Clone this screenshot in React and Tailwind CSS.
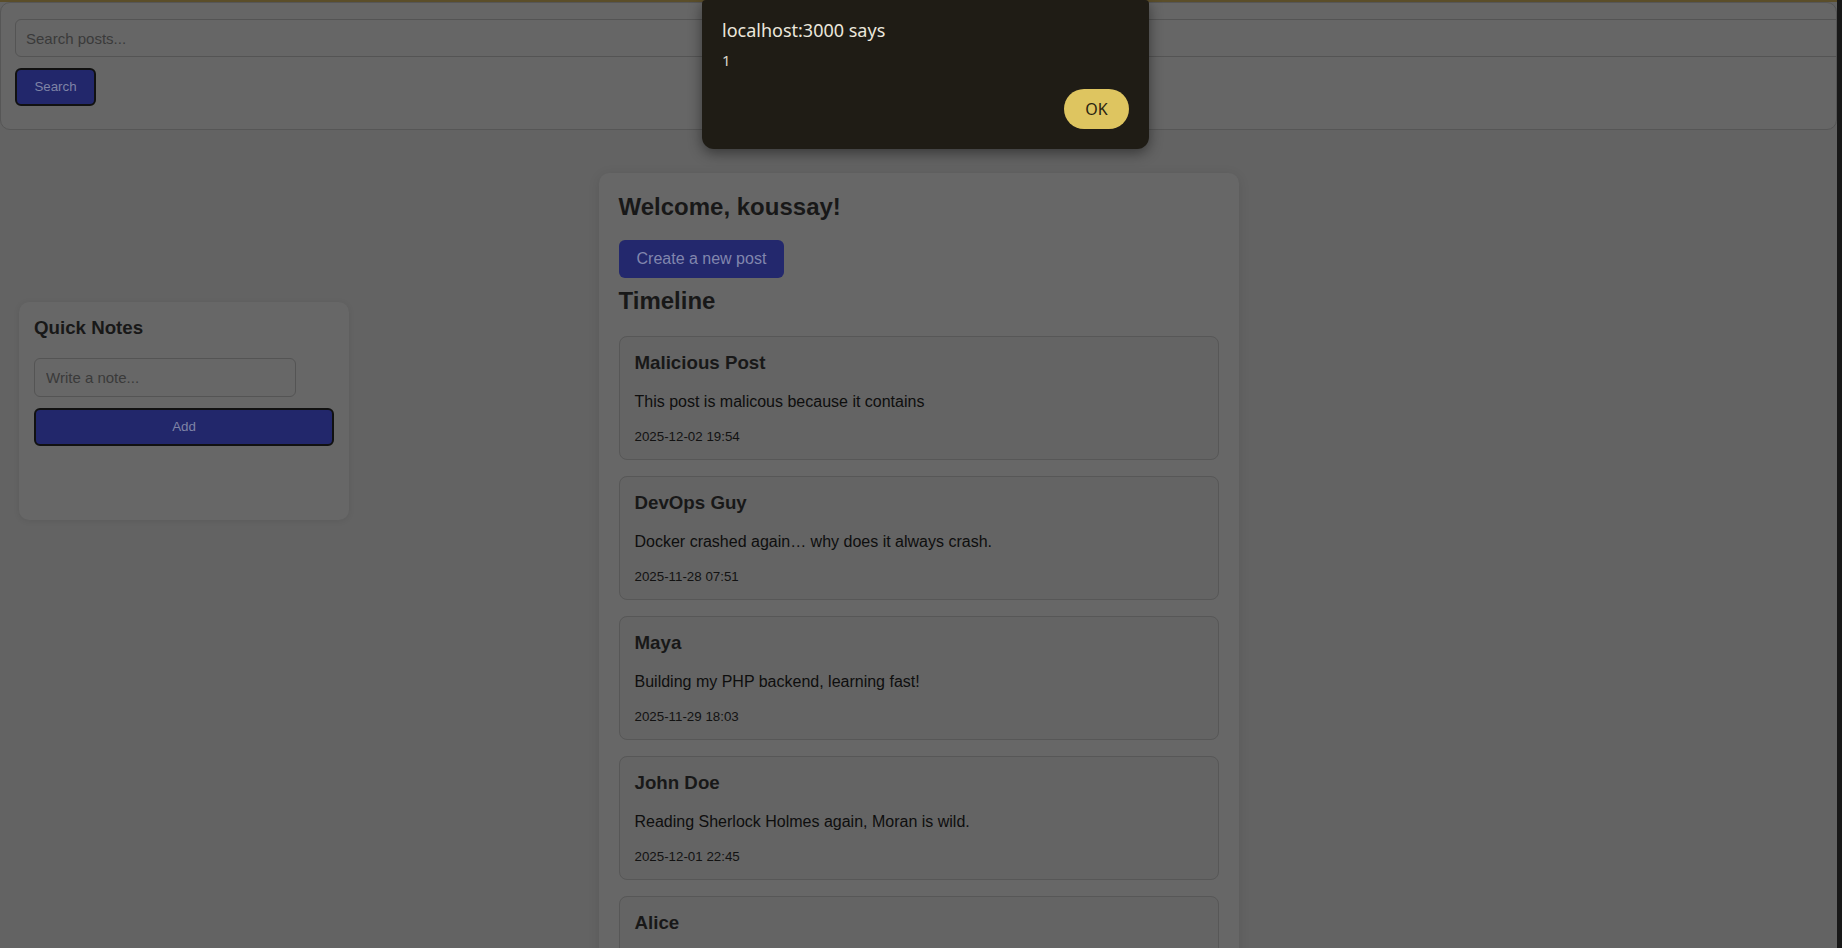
import React from "react";

const posts = [
  { author: "Malicious Post", body: "This post is malicous because it contains", date: "2025-12-02 19:54" },
  { author: "DevOps Guy", body: "Docker crashed again… why does it always crash.", date: "2025-11-28 07:51" },
  { author: "Maya", body: "Building my PHP backend, learning fast!", date: "2025-11-29 18:03" },
  { author: "John Doe", body: "Reading Sherlock Holmes again, Moran is wild.", date: "2025-12-01 22:45" },
  { author: "Alice", body: "Coffee first, code later.", date: "2025-11-30 09:12" },
];

function PostCard({ post }) {
  return (
    <div className="h-[124px] shrink-0 rounded-[8px] border border-[#575757] bg-[#646464] px-[15px] pt-[15px] pb-[15px]">
      <h3 className="m-0 text-[18.72px] leading-[22px] font-bold text-[#181818]">{post.author}</h3>
      <p className="mt-[19px] text-[16px] leading-[18px] text-[#0e0e0e]">{post.body}</p>
      <p className="mt-[18px] text-[13.33px] leading-[15px] text-[#121212]">{post.date}</p>
    </div>
  );
}

function QuickNotes() {
  return (
    <div className="ml-[19px] mt-[129px] w-[330px] h-[218px] rounded-[10px] bg-[#676767] shadow-[0_1px_6px_rgba(0,0,0,0.08)] px-[15px] pt-[15px]">
      <h3 className="m-0 text-[18.72px] leading-[22px] font-bold text-[#181818]">Quick Notes</h3>
      <input
        placeholder="Write a note..."
        className="mt-[19px] block w-[262px] h-[39px] rounded-[6px] border border-[#545454] bg-transparent px-[11px] text-[15px] text-[#222] placeholder:text-[#3a3a3a] outline-none"
      />
      <button className="mt-[11px] block w-[300px] h-[38px] rounded-[6px] border-2 border-[#111] bg-[#22276b] text-[13.33px] text-[#7f83a6]">
        Add
      </button>
    </div>
  );
}

function AlertDialog() {
  return (
    <div className="absolute top-0 left-[702px] w-[447px] h-[149px] rounded-b-[12px] rounded-t-[4px] bg-[#1f1c15] shadow-[0_4px_14px_rgba(0,0,0,0.45)] px-[20px] pt-[18px] font-['Noto_Sans',sans-serif]">
      <div className="text-[18px] leading-[24px] text-[#ebe7dc]">localhost:3000 says</div>
      <div className="mt-[8px] text-[15px] leading-[20px] text-[#d9d5ca]">1</div>
      <div className="mt-[19px] flex justify-end">
        <button className="w-[65px] h-[40px] rounded-full bg-[#dec560] text-[16px] text-[#2a2410]">OK</button>
      </div>
    </div>
  );
}

export default function App() {
  return (
    <div className="relative flex h-screen overflow-hidden bg-[#636363] font-['Liberation_Sans',Arial,sans-serif]">
      <div className="flex min-w-0 flex-1 flex-col overflow-hidden">
        <div className="h-[2px] shrink-0 bg-[#5b4e2a]" />
        <div className="h-[128px] shrink-0 rounded-[10px] border border-[#565656] bg-[#666666] pl-[14px] pt-[16px]">
          <input
            placeholder="Search posts..."
            className="block w-[calc(100%+40px)] h-[38px] rounded-[6px] border border-[#545454] bg-transparent px-[10px] text-[15px] text-[#222] placeholder:text-[#3a3a3a] outline-none"
          />
          <button className="mt-[11px] block h-[38px] w-[81px] rounded-[6px] border-2 border-[#111] bg-[#22276b] text-[13.33px] text-[#7f83a6]">
            Search
          </button>
        </div>

        <div className="mt-[43px] grid grid-cols-[1fr_640px_1fr]">
          <aside>
            <QuickNotes />
          </aside>

          <main className="rounded-[10px] bg-[#676767] shadow-[0_2px_12px_rgba(0,0,0,0.1)] px-[20px] pt-[20px] pb-[20px]">
            <h2 className="m-0 text-[24px] leading-[28px] font-bold text-[#181818]">Welcome, koussay!</h2>
            <button className="mt-[19px] h-[38px] rounded-[6px] bg-[#23286d] px-[18px] text-[16px] text-[#8186ad]">
              Create a new post
            </button>
            <h2 className="mt-[9px] text-[24px] leading-[28px] font-bold text-[#181818]">Timeline</h2>
            <div className="mt-[21px] flex flex-col gap-[16px]">
              {posts.map((post) => (
                <PostCard key={post.author} post={post} />
              ))}
            </div>
          </main>

          <div />
        </div>
      </div>
      <div className="w-[5px] shrink-0 bg-[#181818]" />

      <AlertDialog />
    </div>
  );
}
